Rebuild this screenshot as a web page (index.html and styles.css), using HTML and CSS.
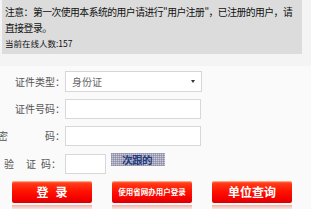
FILE: index.html
```html
<!DOCTYPE html>
<html lang="zh-CN">
<head>
<meta charset="utf-8">
<title>登录</title>
<link rel="stylesheet" href="styles.css">
</head>
<body>
<div class="notice">
  <p class="notice-text">注意：第一次使用本系统的用户请进行"用户注册"，已注册的用户，请<br>直接登录。</p>
  <p class="online">当前在线人数:157</p>
</div>
<form class="login">
  <div class="row">
    <label class="label">证件类型：</label>
    <div class="select"><span class="select-value">身份证</span><span class="arrow"></span></div>
  </div>
  <div class="row">
    <label class="label">证件号码：</label>
    <input class="field" type="text">
  </div>
  <div class="row">
    <label class="label"><span class="pw-first">密</span>码：</label>
    <input class="field" type="password">
  </div>
  <div class="row row-captcha">
    <label class="label label-captcha"><span class="c1">验</span><span class="c2">证</span>码：</label>
    <input class="field field-captcha" type="text">
    <div class="captcha"><span class="captcha-text">次跟的</span></div>
  </div>
  <div class="buttons">
    <div class="btn-wrap">
      <button class="btn btn-big btn-login" type="button">登录</button>
      <div class="reflect"></div>
    </div>
    <div class="btn-wrap">
      <button class="btn btn-small" type="button">使用省网办用户登录</button>
      <div class="reflect"></div>
    </div>
    <div class="btn-wrap">
      <button class="btn btn-big" type="button">单位查询</button>
      <div class="reflect"></div>
    </div>
  </div>
</form>
</body>
</html>
```
FILE: styles.css
```css
html, body {
  margin: 0;
  padding: 0;
}
body {
  background: #f4f4f4;
  font-family: "Noto Sans CJK SC", "Noto Sans", sans-serif;
  color: #111;
  overflow: hidden;
}
.notice {
  box-sizing: border-box;
  margin-left: 2px;
  width: 300px;
  height: 54px;
  background: #dcdcdc;
  padding: 4px 0 0 3px;
}
.notice-text {
  margin: 0;
  font-size: 9.8px;
  line-height: 16px;
  letter-spacing: -0.5px;
  white-space: nowrap;
  color: #111;
}
.online {
  margin: 1px 0 0;
  font-size: 8.5px;
  line-height: 13px;
  color: #111;
}
.login {
  margin: 12px 0 0;
  padding-top: 5px;
  background: #fafafa;
  display: flex;
  flex-direction: column;
  gap: 7px;
}
.row {
  display: flex;
  align-items: center;
}
.row-captcha {
  margin-top: 1px;
}
.label {
  width: 65px;
  flex-shrink: 0;
  display: flex;
  justify-content: flex-end;
  font-size: 10px;
  line-height: 14px;
  color: #555;
  white-space: nowrap;
}
.pw-first {
  margin-right: 37px;
}
.label-captcha {
  padding-right: 4px;
  box-sizing: border-box;
}
.c1 {
  margin-right: 12px;
}
.c2 {
  margin-right: 5px;
}
.select {
  box-sizing: border-box;
  width: 137px;
  height: 21px;
  border: 1px solid #d6d6d6;
  background: #fff;
  display: flex;
  align-items: center;
  padding: 0 6px 0 6px;
}
.select-value {
  font-size: 10px;
  color: #666;
}
.arrow {
  margin-left: auto;
  width: 0;
  height: 0;
  border-left: 2.5px solid transparent;
  border-right: 2.5px solid transparent;
  border-top: 3.5px solid #333;
}
.field {
  box-sizing: border-box;
  width: 136px;
  height: 20px;
  margin: 0;
  border: 1px solid #d8d8d8;
  background: #fff;
  padding: 0 4px;
  font-size: 10px;
  outline: none;
}
.field-captcha {
  width: 41px;
}
.captcha {
  margin-left: 5px;
  align-self: flex-start;
  width: 54px;
  height: 13px;
  background-color: #c9c9d8;
  background-image:
    repeating-linear-gradient(0deg, rgba(120,120,150,0.45) 0 1px, transparent 1px 2px),
    repeating-linear-gradient(90deg, rgba(120,120,150,0.45) 0 1px, transparent 1px 2px);
  display: flex;
  align-items: center;
  padding-left: 11px;
  box-sizing: border-box;
  margin-top: -1px;
}
.captcha-text {
  font-size: 10.5px;
  line-height: 13px;
  font-weight: bold;
  color: #233a80;
  letter-spacing: -0.5px;
}
.buttons {
  display: flex;
  gap: 20px;
  margin-left: 12px;
}
.btn-wrap {
  display: flex;
  flex-direction: column;
  width: 80px;
}
.btn {
  width: 80px;
  height: 22px;
  border: none;
  border-radius: 2px;
  padding: 0;
  margin: 0;
  color: #fff;
  font-family: "Noto Sans CJK SC", sans-serif;
  font-weight: bold;
  background: linear-gradient(to bottom, #ff7a50 0%, #ff3a18 12%, #ff1400 45%, #f40000 80%, #d80000 100%);
  box-shadow: inset 0 1px 0 rgba(255,200,170,0.6);
  cursor: pointer;
}
.btn-big {
  font-size: 12px;
  line-height: 22px;
}
.btn-login {
  letter-spacing: 7px;
  text-indent: 7px;
}
.btn-small {
  font-size: 7.5px;
  line-height: 22px;
  letter-spacing: 0;
}
.reflect {
  margin-top: 2px;
  height: 5px;
  background: linear-gradient(to bottom, #f2b0a6, rgba(250,220,215,0.2));
}
```
